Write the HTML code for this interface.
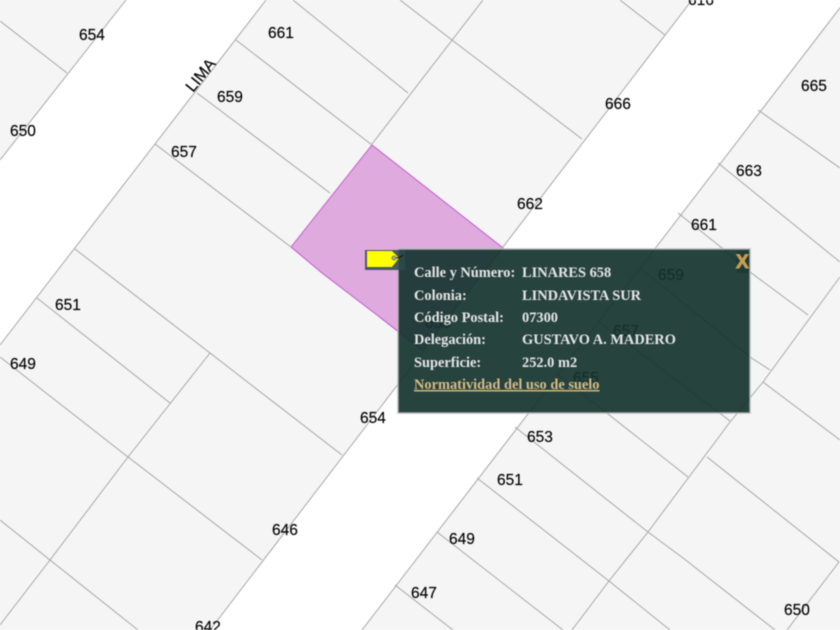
<!DOCTYPE html>
<html><head><meta charset="utf-8"><title>Mapa</title>
<style>
html,body{margin:0;padding:0;width:840px;height:630px;overflow:hidden;background:#f5f5f5}
svg{position:absolute;left:0;top:0;filter:blur(.45px)}
.l{fill:none;stroke:#a4a4a4;stroke-width:.95}
.n{font:15.5px "Liberation Sans",sans-serif;fill:#000;stroke:#000;stroke-width:.15}
.t{font:bold 14.4px "Liberation Serif",serif;fill:#e6e6e6}
</style></head><body>
<svg width="840" height="630" viewBox="0 0 840 630" xmlns="http://www.w3.org/2000/svg">
<rect width="840" height="630" fill="#f5f5f5"/>
<polygon points="126,0 266,0 0,345 0,160" fill="#fff"/>
<polygon points="692,0 846,0 362,630 210,630" fill="#fff"/>
<polygon points="372,145 503,248 422,350 377,315 322,273 291,247" fill="#dfabdf" stroke="#c558d0" stroke-width="1"/>
<g class="l">
<path d="M126,0L0,160M266,0L0,345"/>
<path d="M692,0L210,630M846,0L362,630"/>
<path d="M0,21L67,73M293,0L408,93M400,0L452,40L582,139M236,40L372,145M197,93L330,193M155,144L291,247"/>
<path d="M75,249L210,353L342,455M37,298L170,403M0,357L128,457L262,560M0,520L50,560L138,630"/>
<path d="M483,0L372,144M210,353L128,457L50,560L0,625M620,0L665,35"/>
<path d="M758,110L840,168M718,163L840,262M678,213L722,248L750,272L808,315"/>
<path d="M840,277L763,382L730,422L689,477L648,532L609,581L572,630"/>
<path d="M763,382L840,440M707,457L839,562L787,630M640,268L750,357L770,370M597,320L730,421M556,373L688,477"/>
<path d="M515,427L648,532L683,558L775,630M477,478L609,581L670,630M437,532L563,630M395,585L453,630"/>
</g>
<g class="n">
<text x="79" y="40">654</text><text x="268" y="38">661</text><text x="217" y="102">659</text>
<text x="10" y="136">650</text><text x="171" y="157">657</text><text x="605" y="109">666</text>
<text x="801" y="91">665</text><text x="736" y="176">663</text><text x="517" y="209">662</text>
<text x="691" y="230">661</text><text x="55" y="310">651</text><text x="10" y="369">649</text>
<text x="360" y="423">654</text><text x="527" y="442">653</text><text x="497" y="485">651</text>
<text x="449" y="544">649</text><text x="272" y="535">646</text><text x="411" y="598">647</text>
<text x="784" y="615">650</text><text x="195" y="632">642</text><text x="688" y="5">616</text>
<text x="658" y="280">659</text><text x="613" y="336">657</text><text x="573" y="383">655</text>
<text x="425" y="328">658</text>
<text transform="translate(193,93) rotate(-51)" style="font-size:16px">LIMA</text>
</g>
<rect x="398" y="249" width="352" height="164" fill="#15332e" fill-opacity=".92" stroke="#b4b4b4" stroke-width="1.4"/>
<rect x="365" y="250" width="40" height="20" fill="#2f4a4a" fill-opacity=".85"/>
<path d="M367,251H392L399,258L392,267H367Z" fill="#ffff00"/>
<circle cx="394" cy="258" r="2" fill="#aaa" stroke="#555" stroke-width=".7"/>
<path d="M396,258Q400,258 403,255" fill="none" stroke="#111" stroke-width="1"/>
<rect x="737" y="251" width="12" height="22" fill="#1d3a36"/>
<text x="736" y="268" style="font:bold 19px 'Liberation Sans',sans-serif;stroke:#c99c52;stroke-width:.9" fill="#c99c52">X</text>
<g class="t">
<text x="414" y="277">Calle y Número:</text><text x="522" y="277">LINARES 658</text>
<text x="414" y="300">Colonia:</text><text x="522" y="300">LINDAVISTA SUR</text>
<text x="414" y="322">Código Postal:</text><text x="522" y="322">07300</text>
<text x="414" y="344">Delegación:</text><text x="522" y="344">GUSTAVO A. MADERO</text>
<text x="414" y="367">Superficie:</text><text x="522" y="367">252.0 m2</text>
<text x="414" y="389" style="fill:#d9bd82;text-decoration:underline">Normatividad del uso de suelo</text>
</g>
</svg>
</body></html>
